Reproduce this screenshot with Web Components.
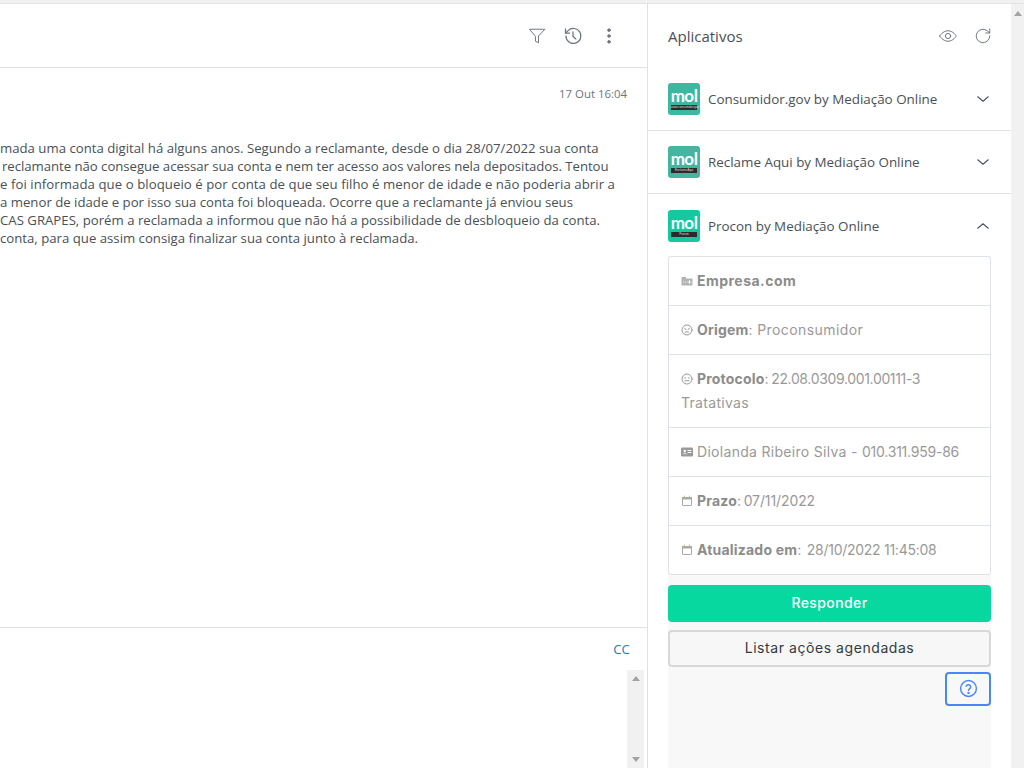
<!DOCTYPE html>
<html lang="pt-BR"><head><meta charset="utf-8"><title>Aplicativos</title>
<style>html,body{margin:0;height:100%;overflow:hidden;background:#fff}</style></head>
<body>
<app-shell>
  <message-pane slot="main" date="17 Out 16:04">
    <span slot="line" style="--in:0px">mada uma conta digital há alguns anos. Segundo a reclamante, desde o dia 28/07/2022 sua conta</span>
    <span slot="line" style="--in:2px;letter-spacing:-.04px">reclamante não consegue acessar sua conta e nem ter acesso aos valores nela depositados. Tentou</span>
    <span slot="line" style="--in:0px;letter-spacing:.06px">e foi informada que o bloqueio é por conta de que seu filho é menor de idade e não poderia abrir a</span>
    <span slot="line" style="--in:0px">a menor de idade e por isso sua conta foi bloqueada. Ocorre que a reclamante já enviou seus</span>
    <span slot="line" style="--in:0px">CAS GRAPES, porém a reclamada a informou que não há a possibilidade de desbloqueio da conta.</span>
    <span slot="line" style="--in:0px">conta, para que assim consiga finalizar sua conta junto à reclamada.</span>
  </message-pane>
  <apps-panel slot="side">
    <app-item tag="www.consumidor.gov" bg="#3cb8a0" label="Consumidor.gov by Mediação Online"></app-item>
    <app-item tag="Reclame Aqui" bg="#46b59f" label="Reclame Aqui by Mediação Online"></app-item>
    <app-item tag="Procon" bg="#14c8a0" label="Procon by Mediação Online" open>
      <info-card>
        <info-row icon="building"><b style="letter-spacing:.47px">Empresa.com</b></info-row>
        <info-row icon="frown"><b>Origem</b>: <span style="letter-spacing:.43px">Proconsumidor</span></info-row>
        <info-row icon="meh"><b>Protocolo</b>: <span style="letter-spacing:-.35px;margin-left:-2px">22.08.0309.001.00111-3</span><br>Tratativas</info-row>
        <info-row icon="card">Diolanda Ribeiro Silva - <span style="letter-spacing:-.23px">010.311.959-86</span></info-row>
        <info-row icon="cal"><b>Prazo</b>: <span style="letter-spacing:-.1px;margin-left:-2px">07/11/2022</span></info-row>
        <info-row icon="cal"><b>Atualizado em</b>: <span style="letter-spacing:-.27px;margin-left:1px">28/10/2022 11:45:08</span></info-row>
      </info-card>
      <action-buttons></action-buttons>
    </app-item>
  </apps-panel>
</app-shell>
<script>
const def=(n,html)=>customElements.define(n,class extends HTMLElement{
  constructor(){super();this.attachShadow({mode:'open'}).innerHTML=typeof html==='function'?html(this):html;}
});
const svg=(d,s=18,w=1.5,c='#6c757d')=>`<svg width="${s}" height="${s}" viewBox="0 0 24 24" fill="none" stroke="${c}" stroke-width="${w}" stroke-linecap="round" stroke-linejoin="round">${d}</svg>`;
const I={
 filter:'<path d="M22 3H2l8 9.5V19l4 2v-8.5z"/>',
 history:'<path d="M3.5 12a9 9 0 1 0 2.6-6.4L3 8.5"/><path d="M3 3.5v5h5"/><path d="M12 7v5.5l3.5 3"/>',
 more:'<circle cx="12" cy="5" r="1.6" fill="#6c757d"/><circle cx="12" cy="12" r="1.6" fill="#6c757d"/><circle cx="12" cy="19" r="1.6" fill="#6c757d"/>',
 eye:'<path d="M1 12s4-7 11-7 11 7 11 7-4 7-11 7-11-7-11-7z"/><circle cx="12" cy="12" r="3.5"/>',
 refresh:'<path d="M21 12a9 9 0 1 1-3-6.7L21 8"/><path d="M21 2.5V8h-5.5"/>',
 down:'<path d="M5 9l7 6 7-6"/>',
 up:'<path d="M5 15l7-6 7 6"/>',
 help:'<circle cx="12" cy="12" r="10"/><path d="M9 9.2a3 3 0 0 1 5.8 1c0 2-2.8 2.4-2.8 4"/><circle cx="12" cy="17.6" r=".6" fill="#4a86f7"/>'
};
const small={
 building:'<path fill="#b4b4b4" stroke="none" d="M1 4h9v3h13v14H1z"/><path stroke="#fff" stroke-width="1.6" d="M5 14h1M9 14h1M17 11v6M14 14h6"/>',
 frown:'<circle cx="12" cy="12" r="10" stroke="#999" stroke-width="2"/><path stroke="#999" stroke-width="2" d="M8 17c2-2.4 6-2.4 8 0M7 9.5l3 1M17 9.5l-3 1"/>',
 meh:'<circle cx="12" cy="12" r="10" stroke="#999" stroke-width="2"/><path stroke="#999" stroke-width="2" d="M8 15.5h8M7.5 10h2M14.5 10h2"/>',
 card:'<rect x="0" y="3" width="24" height="18" rx="2.5" fill="#999" stroke="none"/><circle cx="7.5" cy="10" r="2.4" fill="#fff" stroke="none"/><path stroke="#fff" stroke-width="2" d="M4.5 16c1-2.4 5-2.4 6 0M14 9h6M14 13h6"/>',
 cal:'<path fill="#a8a8a8" stroke="none" d="M2 4h20v5H2z"/><rect x="3" y="5" width="18" height="16" rx="1" stroke="#a8a8a8" stroke-width="2"/><path stroke="#c9b49c" stroke-width="2" d="M7 2v3M17 2v3"/>'
};

def('app-shell',`<style>
:host{display:block;height:768px;box-sizing:border-box;background:#fff}
.strip{height:3px;background:#f1f1f1;border-bottom:1px solid #dee2e6}
.cols{display:flex;height:764px}
.main{flex:0 0 647px;min-width:0;border-right:1px solid #dee2e6}
.side{flex:1;min-width:0}
.bar{flex:0 0 13px;background:#f1f1f1;display:flex;justify-content:center;padding-top:7px;box-sizing:border-box}
.bar i{width:0;height:0;border:4px solid transparent;border-top:0;border-bottom:5px solid #a3a3a3}
</style><div class="strip"></div><div class="cols"><div class="main"><slot name="main"></slot></div><div class="side"><slot name="side"></slot></div><div class="bar"><i></i></div></div>`);

def('message-pane',h=>`<style>
:host{display:flex;flex-direction:column;height:100%;font:13px/18px "Open Sans","Noto Sans",sans-serif;color:#495057}
header{flex:0 0 64px;box-sizing:border-box;border-bottom:1px solid #dee2e6;display:flex;justify-content:flex-end;align-items:center;gap:16px;padding:1px 28px 0 0}
header span{display:flex;width:20px;justify-content:center}
.body{flex:1;overflow:hidden;padding:16px 20px 0 0}
.date{text-align:right;font-size:11.4px;line-height:20px;color:#6c757d}
.text{margin-top:35px;white-space:nowrap;font-size:13.2px}
::slotted(span){display:block;margin-left:var(--in)}
.reply{flex:0 0 141px;box-sizing:border-box;border-top:1px solid #dee2e6;display:flex;flex-direction:column;align-items:flex-end}
.cc{font-size:13.4px;line-height:18px;color:#2b7cc4;margin:12px 17px 12px 0}
.sb{flex:1;width:17px;margin-right:3px;background:#f1f1f1;display:flex;flex-direction:column;justify-content:space-between;align-items:center;padding:6px 0;box-sizing:border-box}
.sb i{width:0;height:0;border:4px solid transparent}
.sb i:first-child{border-top:0;border-bottom:5px solid #a3a3a3}
.sb i:last-child{border-bottom:0;border-top:5px solid #a3a3a3}
</style>
<header><span>${svg(I.filter,18,1.3)}</span><span>${svg(I.history,20,1.5)}</span><span>${svg(I.more,20,1)}</span></header>
<div class="body"><div class="date">${h.getAttribute('date')}</div><div class="text"><slot name="line"></slot></div></div>
<div class="reply"><div class="cc">CC</div><div class="sb"><i></i><i></i></div></div>`);

def('apps-panel',`<style>
:host{display:block;height:100%;overflow:hidden;font-family:"Open Sans","Noto Sans",sans-serif}
header{height:64px;box-sizing:border-box;display:flex;align-items:center;padding:0 20px;gap:17px;color:#495057;font-size:15px}
header b{font-weight:400;flex:1}
header span{display:flex}
</style><header><b>Aplicativos</b><span>${svg(I.eye,18,1.3)}</span><span style="margin-right:-1px">${svg(I.refresh,18,1.3)}</span></header><slot></slot>`);

def('mol-logo',h=>`<style>
:host{display:flex;flex:0 0 32px;height:32px;border-radius:3px;background:${h.getAttribute('bg')};flex-direction:column;align-items:center;overflow:hidden;box-sizing:border-box;padding-top:4px}
.m{font:700 17px/17px Lato,"Open Sans",sans-serif;color:#fff;letter-spacing:-.5px}
.t{background:#2b2b2b;color:#ddd;font:400 3px/5px "Liberation Sans",sans-serif;width:26px;text-align:center;white-space:nowrap;margin-top:1px}
</style><div class="m">mol</div><div class="t">${h.getAttribute('tag')}</div>`);

def('app-item',h=>{const open=h.hasAttribute('open');return `<style>
:host{display:block;border-bottom:1px solid #dee2e6}
:host([open]){border-bottom:0}
.head{height:62px;box-sizing:border-box;display:flex;align-items:center;padding:${open?'2px':'0'} 20px 0;gap:8px;color:#495057;font-size:13.4px}
.head b{flex:1;font-weight:400;white-space:nowrap}
.head span{display:flex;margin-right:-1px}
.body{margin:0 20px;background:#f8f8f8;height:512px;padding:0}
</style><div class="head"><mol-logo bg="${h.getAttribute('bg')}" tag="${h.getAttribute('tag')}"></mol-logo><b>${h.getAttribute('label')}</b><span>${svg(open?I.up:I.down,18,1.4,'#495057')}</span></div>${open?'<div class="body"><slot></slot></div>':''}`});

def('info-card',`<style>:host{display:block;background:#fff;border:1px solid #dee2e6;border-radius:3px}
::slotted(info-row:not(:last-child)){border-bottom:1px solid #dee2e6}</style><slot></slot>`);

def('info-row',h=>`<style>
:host{display:block;padding:12px 12px;font:14px/24px Inter,"Open Sans",sans-serif;letter-spacing:.3px;color:#999}
svg{vertical-align:-1px;margin-right:4px}
::slotted(b){font-weight:700;color:#8c8c8c;letter-spacing:.2px}
</style>${svg(small[h.getAttribute('icon')],12,2,'#999')}<slot></slot>`);

def('action-buttons',`<style>
:host{display:flex;flex-direction:column;font:14px/20px Inter,"Open Sans",sans-serif}
.r{margin-top:10px;height:37px;box-sizing:border-box;padding-bottom:2px;background:#07d8a0;border-radius:4px;color:#fff;display:flex;align-items:center;justify-content:center;font-weight:500;letter-spacing:.4px}
.l{margin-top:8px;height:37px;box-sizing:border-box;padding-bottom:2px;background:#f7f7f7;border:2px solid #d8d8d8;border-radius:4px;color:#343a40;display:flex;align-items:center;justify-content:center;letter-spacing:.56px}
.h{align-self:flex-end;margin-top:5px;width:46px;height:34px;box-sizing:border-box;padding-bottom:2px;border:2px solid #4a86f7;border-radius:4px;display:flex;align-items:center;justify-content:center}
</style><div class="r">Responder</div><div class="l">Listar ações agendadas</div><div class="h">${svg(I.help,19,1.8,'#4a86f7')}</div>`);
</script>
</body></html>
